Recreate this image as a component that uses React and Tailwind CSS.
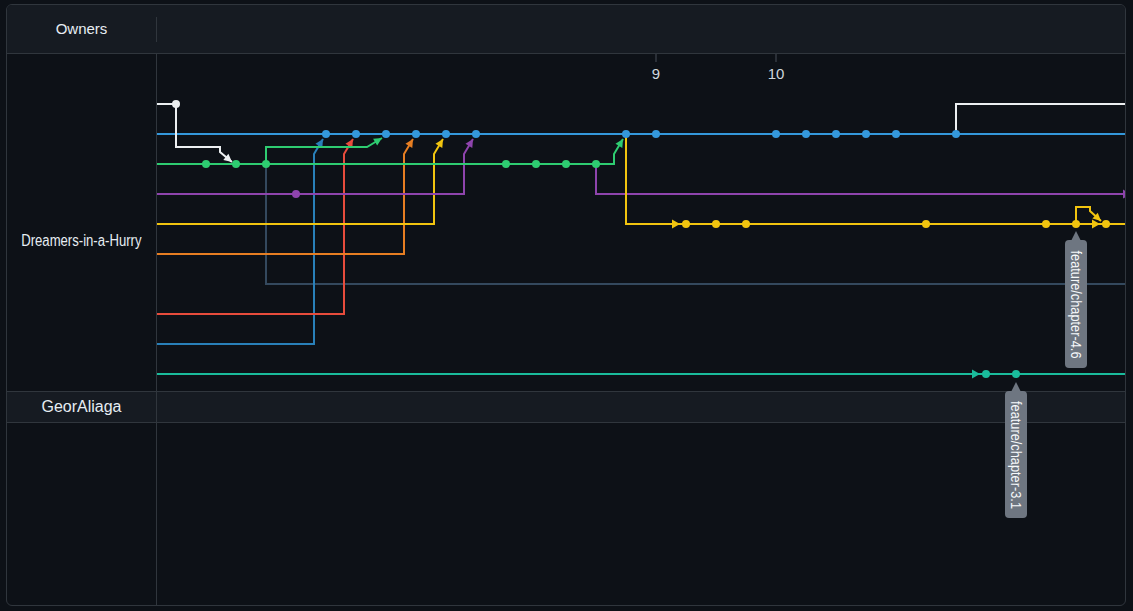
import React from "react";

const W = "#eceff1";
const B = "#3498db";
const G = "#2ecc71";
const P = "#8e44ad";
const Y = "#f1c40f";
const O = "#e67e22";
const S = "#34495e";
const R = "#e74c3c";
const B2 = "#2980b9";
const T = "#1abc9c";

// polylines in page coordinates, arrow = arrowhead at the last point
const lines = [
  { c: B, pts: [[157, 134], [1125, 134]] },
  { c: W, pts: [[956, 134], [956, 104], [1125, 104]] },
  { c: S, pts: [[266, 164], [266, 284], [1125, 284]] },
  { c: T, pts: [[157, 374], [1125, 374]] },
  { c: B2, pts: [[157, 344], [314, 344], [314, 154], [323, 139]], arrow: true },
  { c: R, pts: [[157, 314], [344, 314], [344, 154], [353, 139]], arrow: true },
  { c: O, pts: [[157, 254], [404, 254], [404, 154], [413, 139]], arrow: true },
  { c: Y, pts: [[157, 224], [434, 224], [434, 154], [443, 139]], arrow: true },
  { c: P, pts: [[157, 194], [464, 194], [464, 154], [473, 139]], arrow: true },
  { c: P, pts: [[596, 164], [596, 194], [1125, 194]] },
  { c: Y, pts: [[626, 134], [626, 224], [1125, 224]] },
  { c: Y, pts: [[1076, 224], [1076, 207], [1090, 207], [1090, 211], [1101, 221]], arrow: true },
  { c: G, pts: [[157, 164], [614, 164], [614, 154], [623, 139]], arrow: true },
  { c: G, pts: [[266, 164], [266, 147], [367, 147], [382, 138]], arrow: true },
  { c: W, pts: [[157, 104], [176, 104], [176, 147], [220, 147], [220, 152], [232, 162]], arrow: true },
];

// arrowheads pointing right on a row: [color, tipX, y]
const rightArrows = [
  [Y, 680, 224],
  [Y, 1100, 224],
  [T, 980, 374],
  [P, 1131, 194],
];

const dots = [
  [W, [176], 104],
  [B, [326, 356, 386, 416, 446, 476, 626, 656, 776, 806, 836, 866, 896, 956], 134],
  [G, [206, 236, 266, 506, 536, 566, 596], 164],
  [P, [296], 194],
  [Y, [686, 716, 746, 926, 1046, 1076, 1106], 224],
  [T, [986, 1016], 374],
];

function arrowHead(x1, y1, x2, y2, len = 8, half = 4) {
  const dx = x2 - x1;
  const dy = y2 - y1;
  const d = Math.hypot(dx, dy);
  const ux = dx / d;
  const uy = dy / d;
  const bx = x2 - ux * len;
  const by = y2 - uy * len;
  return `${x2},${y2} ${bx - uy * half},${by + ux * half} ${bx + uy * half},${by - ux * half}`;
}

function Tag({ x, top, bottom, label }) {
  const mid = (top + 10 + bottom) / 2;
  return (
    <g>
      <polygon points={`${x},${top} ${x - 5},${top + 10} ${x + 5},${top + 10}`} fill="#6e7681" />
      <rect x={x - 11} y={top + 9} width="22" height={bottom - top - 9} rx="4" fill="#6e7681" />
      <text
        x={x}
        y={mid}
        transform={`rotate(90 ${x} ${mid})`}
        textAnchor="middle"
        dominantBaseline="central"
        fontSize="15"
        textLength="108"
        lengthAdjust="spacingAndGlyphs"
        fill="#f6f8fa"
      >
        {label}
      </text>
    </g>
  );
}

function Graph() {
  return (
    <svg
      className="absolute left-[150px] top-[49px] pointer-events-none"
      width="968"
      height="551"
      viewBox="157 54 968 551"
    >
      {/* month ticks */}
      <line x1="656" y1="54" x2="656" y2="62" stroke="#484f58" strokeWidth="1" />
      <line x1="776" y1="54" x2="776" y2="62" stroke="#484f58" strokeWidth="1" />
      <text x="656" y="73" textAnchor="middle" dominantBaseline="central" fontSize="15" fill="#d0d7de">
        9
      </text>
      <text x="776" y="73" textAnchor="middle" dominantBaseline="central" fontSize="15" fill="#d0d7de">
        10
      </text>

      {lines.map((l, i) => {
        const n = l.pts.length;
        const [x1, y1] = l.pts[n - 2];
        const [x2, y2] = l.pts[n - 1];
        return (
          <g key={i}>
            <polyline
              points={l.pts.map((p) => p.join(",")).join(" ")}
              fill="none"
              stroke={l.c}
              strokeWidth="2"
              strokeLinejoin="miter"
            />
            {l.arrow && <polygon points={arrowHead(x1, y1, x2, y2)} fill={l.c} />}
          </g>
        );
      })}

      {rightArrows.map(([c, x, y], i) => (
        <polygon key={i} points={`${x},${y} ${x - 8},${y - 4.5} ${x - 8},${y + 4.5}`} fill={c} />
      ))}

      {dots.map(([c, xs, y]) =>
        xs.map((x) => <circle key={`${c}-${x}-${y}`} cx={x} cy={y} r="4" fill={c} />)
      )}

      <Tag x={1076} top={231} bottom={368} label="feature/chapter-4.6" />
      <Tag x={1016} top={382} bottom={518} label="feature/chapter-3.1" />
    </svg>
  );
}

export default function App() {
  return (
    <div className="min-h-screen bg-[#0d1117] pt-1 pl-1.5 font-['Liberation_Sans',Arial,sans-serif]">
      <div className="relative w-[1120px] h-[602px] rounded-md border border-[#30363d] overflow-hidden flex flex-col">
        {/* header */}
        <div className="h-[49px] shrink-0 flex items-center bg-[#161b22] border-b border-[#30363d]">
          <div className="w-[149px] text-center text-[15px] text-[#e6edf3]">Owners</div>
          <div className="w-px h-[25px] bg-[#30363d]" />
        </div>

        {/* Dreamers-in-a-Hurry */}
        <div className="h-[337px] shrink-0 flex">
          <div className="w-[150px] border-r border-[#30363d] flex justify-center pt-[178px]">
            <span className="inline-block scale-x-82 text-[16px] leading-[18px] text-[#e6edf3] whitespace-nowrap">
              Dreamers-in-a-Hurry
            </span>
          </div>
          <div className="flex-1" />
        </div>

        {/* GeorAliaga */}
        <div className="h-[32px] shrink-0 flex bg-[#161b22] border-y border-[#30363d]">
          <div className="w-[150px] border-r border-[#30363d] flex items-center justify-center text-[16px] text-[#e6edf3]">
            GeorAliaga
          </div>
          <div className="flex-1" />
        </div>

        <div className="flex-1 flex">
          <div className="w-[150px] border-r border-[#30363d]" />
          <div className="flex-1" />
        </div>

        <Graph />
      </div>
    </div>
  );
}
